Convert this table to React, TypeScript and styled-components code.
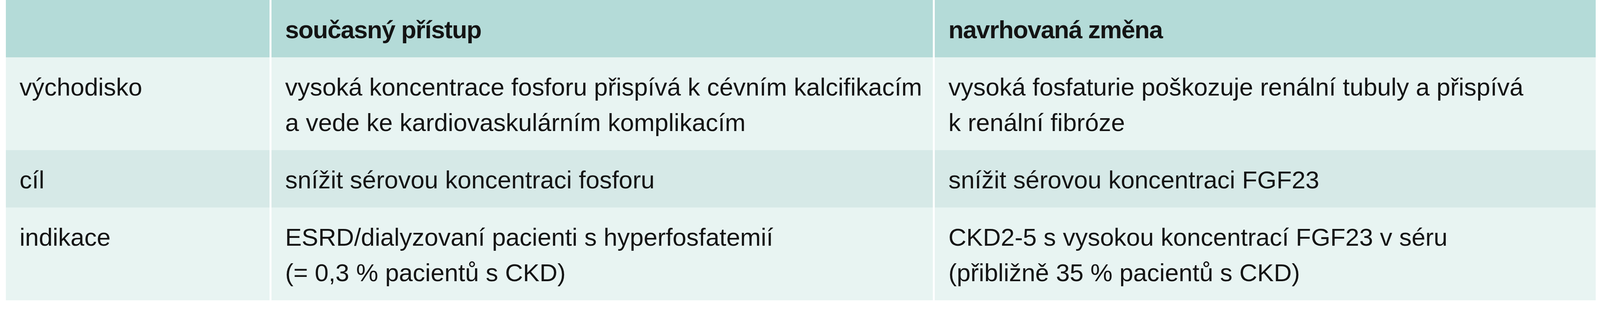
import React from "react";
import styled, { createGlobalStyle } from "styled-components";

/* The browser viewport is 4096px wide, so the 4620px-wide reference is laid
   out horizontally at 4096/4620 of its size; vertical metrics are unchanged. */

const Global = createGlobalStyle`
  html, body { margin: 0; padding: 0; background: #ffffff; }
  body { overflow: hidden; }
`;

const Page = styled.div`
  padding: 0 11px 0 15px;
`;

const Table = styled.div`
  display: grid;
  grid-template-columns: 675px 1693px 1692px;
  column-gap: 5px;
  font-family: "Liberation Sans Narrow", "Liberation Sans", Arial, sans-serif;
  font-size: 63.5px;
  line-height: 91px;
  color: #141414;
`;

type Tone = "head" | "light" | "mid";

const tones: Record<Tone, string> = {
  head: "#b4dbd8",
  light: "#e8f4f2",
  mid: "#d6e9e7",
};

const Cell = styled.div<{ $tone: Tone; $bold?: boolean }>`
  background: ${(p) => tones[p.$tone]};
  padding: 31px 30px 25px 35px;
  font-weight: ${(p) => (p.$bold ? 700 : 400)};
  letter-spacing: ${(p) => (p.$bold ? "-1.5px" : "0")};
  white-space: nowrap;
`;

const rows: { tone: Tone; cells: string[][] }[] = [
  {
    tone: "light",
    cells: [
      ["východisko"],
      [
        "vysoká koncentrace fosforu přispívá k cévním kalcifikacím",
        "a vede ke kardiovaskulárním komplikacím",
      ],
      ["vysoká fosfaturie poškozuje renální tubuly a přispívá", "k renální fibróze"],
    ],
  },
  {
    tone: "mid",
    cells: [["cíl"], ["snížit sérovou koncentraci fosforu"], ["snížit sérovou koncentraci FGF23"]],
  },
  {
    tone: "light",
    cells: [
      ["indikace"],
      ["ESRD/dialyzovaní pacienti s hyperfosfatemií", "(= 0,3 % pacientů s CKD)"],
      ["CKD2-5 s vysokou koncentrací FGF23 v séru", "(přibližně 35 % pacientů s CKD)"],
    ],
  },
];

const Lines = ({ lines }: { lines: string[] }) => (
  <>
    {lines.map((l, i) => (
      <React.Fragment key={i}>
        {i > 0 && <br />}
        {l}
      </React.Fragment>
    ))}
  </>
);

export default function App() {
  return (
    <>
      <Global />
      <Page>
        <Table>
          <Cell $tone="head" $bold>{"\u00a0"}</Cell>
          <Cell $tone="head" $bold>současný přístup</Cell>
          <Cell $tone="head" $bold>navrhovaná změna</Cell>
          {rows.map((r, ri) =>
            r.cells.map((c, ci) => (
              <Cell key={`${ri}-${ci}`} $tone={r.tone}>
                <Lines lines={c} />
              </Cell>
            ))
          )}
        </Table>
      </Page>
    </>
  );
}
